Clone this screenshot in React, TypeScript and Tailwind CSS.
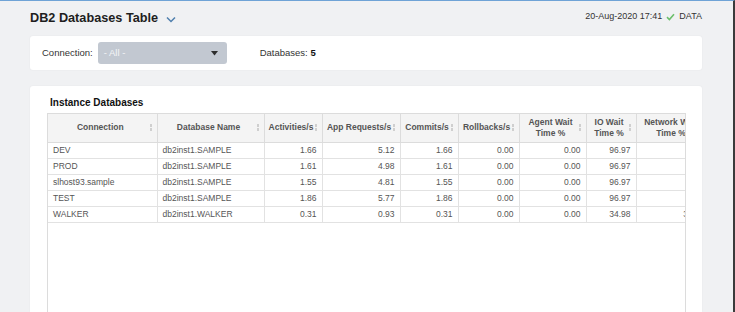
import React from "react";

const cols = [
  { label: ["Connection"], w: 109, align: "left" },
  { label: ["Database Name"], w: 107, align: "left" },
  { label: ["Activities/s"], w: 58, align: "right" },
  { label: ["App Requests/s"], w: 78, align: "right" },
  { label: ["Commits/s"], w: 58, align: "right" },
  { label: ["Rollbacks/s"], w: 61, align: "right" },
  { label: ["Agent Wait", "Time %"], w: 67, align: "right" },
  { label: ["IO Wait", "Time %"], w: 50, align: "right" },
  { label: ["Network Wait", "Time %"], w: 74, align: "right" },
];

const rows = [
  ["DEV", "db2inst1.SAMPLE", "1.66", "5.12", "1.66", "0.00", "0.00", "96.97", "0.00"],
  ["PROD", "db2inst1.SAMPLE", "1.61", "4.98", "1.61", "0.00", "0.00", "96.97", "0.00"],
  ["slhost93.sample", "db2inst1.SAMPLE", "1.55", "4.81", "1.55", "0.00", "0.00", "96.97", "0.00"],
  ["TEST", "db2inst1.SAMPLE", "1.86", "5.77", "1.86", "0.00", "0.00", "96.97", "0.00"],
  ["WALKER", "db2inst1.WALKER", "0.31", "0.93", "0.31", "0.00", "0.00", "34.98", "31.96"],
];

function SortIcon() {
  return (
    <span className="flex flex-col gap-[1px] shrink-0">
      <span className="block w-[2px] h-[3px] bg-[#cfcfcf]" />
      <span className="block w-[2px] h-[3px] bg-[#cfcfcf]" />
    </span>
  );
}

export default function App() {
  return (
    <div
      className="w-[735px] h-[312px] overflow-hidden bg-[#f0f1f3] border-t border-t-[#6fa3d6] border-r-2 border-r-[#3b3b3b] flex flex-col"
      style={{ fontFamily: '"Liberation Sans", Arial, sans-serif' }}
    >
      {/* Header */}
      <div className="h-[35px] shrink-0 flex items-center justify-between pl-[30px] pr-[31px]">
        <div className="flex items-center gap-[8px]">
          <span className="text-[12.7px] font-bold text-[#1e1e1e] leading-none">DB2 Databases Table</span>
          <svg width="10" height="7" viewBox="0 0 10 7" className="mt-[2px]">
            <path d="M1 1.5 L5 5.5 L9 1.5" fill="none" stroke="#4f7fae" strokeWidth="1.5" />
          </svg>
        </div>
        <div className="flex items-center gap-[4px] text-[9px] text-[#333] mt-[-4px]">
          <span>20-Aug-2020 17:41</span>
          <svg width="9" height="8" viewBox="0 0 9 8">
            <path d="M1 4.2 L3.4 6.5 L8 1.2" fill="none" stroke="#6cbf6c" strokeWidth="1.6" />
          </svg>
          <span>DATA</span>
        </div>
      </div>

      {/* Filter card */}
      <div className="mx-[30px] mr-[31px] h-[34px] shrink-0 bg-white rounded-[3px] shadow-[0_0_2px_rgba(0,0,0,0.06)] flex items-center pl-[12px]">
        <span className="text-[9.5px] text-[#333]">Connection:</span>
        <div className="ml-[5px] w-[129px] h-[22px] rounded-[3px] bg-[#c2c8d1] flex items-center justify-between pl-[6px] pr-[9px]">
          <span className="text-[9.5px] text-[#f4f5f7]">- All -</span>
          <svg width="7" height="5" viewBox="0 0 7 5">
            <path d="M0 0 L7 0 L3.5 4.5 Z" fill="#2d2d2d" />
          </svg>
        </div>
        <span className="ml-[33px] text-[9.5px] text-[#333]">
          Databases: <span className="font-bold text-[#111]">5</span>
        </span>
      </div>

      {/* Table card */}
      <div className="mx-[30px] mr-[31px] mt-[16px] flex-1 bg-white rounded-t-[3px] shadow-[0_0_2px_rgba(0,0,0,0.06)] pl-[17px] pr-[17px] flex flex-col">
        <div className="h-[27px] shrink-0 flex items-end pb-[5px]">
          <span className="text-[10px] font-bold text-[#111] leading-none pl-[3px]">Instance Databases</span>
        </div>
        <div className="flex-1 border border-[#dcdcdc] border-b-0 overflow-hidden w-[639px]">
          <table className="border-collapse table-fixed" style={{ width: cols.reduce((a, c) => a + c.w, 0) }}>
            <colgroup>
              {cols.map((c, i) => (
                <col key={i} style={{ width: c.w }} />
              ))}
            </colgroup>
            <thead>
              <tr className="h-[28px] bg-[#f4f4f4]">
                {cols.map((c, i) => (
                  <th
                    key={i}
                    className="border-r border-b border-[#dcdcdc] p-0 font-bold text-[8.5px] text-[#555] leading-[11px]"
                  >
                    <div className="flex items-center pl-[3px] pr-[5px]">
                      <div className="flex-1 text-center whitespace-nowrap">
                        {c.label.map((l, j) => (
                          <div key={j}>{l}</div>
                        ))}
                      </div>
                      <SortIcon />
                    </div>
                  </th>
                ))}
              </tr>
            </thead>
            <tbody>
              {rows.map((r, ri) => (
                <tr key={ri} className="h-[16px]">
                  {r.map((v, ci) => (
                    <td
                      key={ci}
                      className={`border-r border-b border-[#e2e2e2] py-0 text-[8.5px] text-[#555] leading-[15px] whitespace-nowrap ${
                        cols[ci].align === "left" ? "text-left pl-[5px]" : "text-right pr-[5px]"
                      }`}
                    >
                      {v}
                    </td>
                  ))}
                </tr>
              ))}
            </tbody>
          </table>
        </div>
      </div>
    </div>
  );
}
